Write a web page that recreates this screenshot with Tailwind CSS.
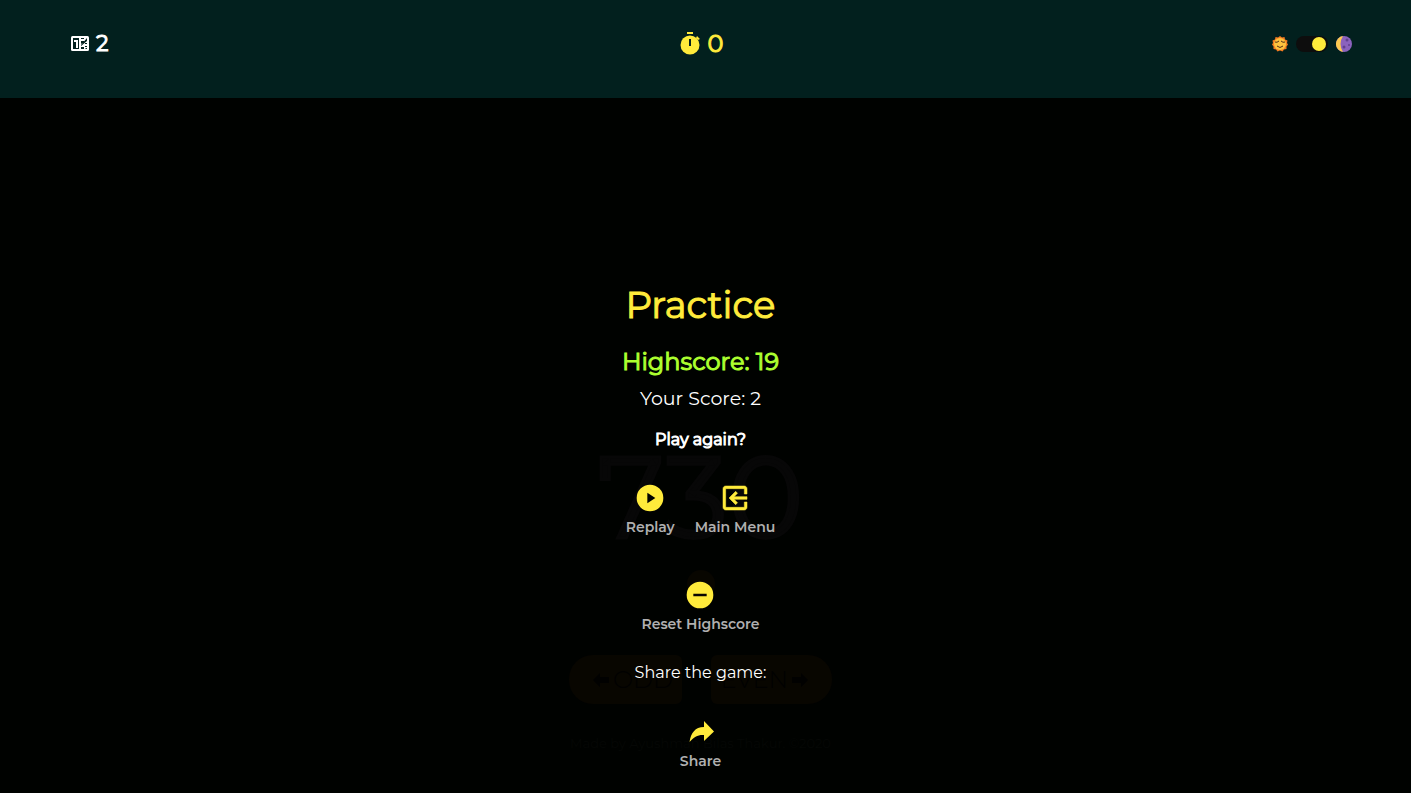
<!DOCTYPE html>
<html lang="en">
<head>
<meta charset="utf-8">
<meta name="viewport" content="width=device-width, initial-scale=1">
<title>Odd or Even</title>
<script src="https://cdn.jsdelivr.net/npm/@tailwindcss/browser@4"></script>
</head>
<body class="flex min-h-screen flex-col bg-[#000200] font-[Montserrat,Inter,sans-serif] text-white">
<header class="flex h-[98px] items-start justify-between bg-[#02201e] pt-7 pr-[59px] pl-[70px]">
  <div class="flex flex-1 items-center gap-1.5 text-[22px] leading-8 [-webkit-text-stroke:1px]">
    <svg class="size-5" viewBox="0 0 20 20"><rect x="1" y="2" width="18" height="15" rx="1.5" fill="#fff"/><path d="M3 4h6v11H3z" fill="#02201e"/><path d="M4 6h4v8H6V8H4z" fill="#fff"/><path d="M11 4h3v1h-3zM11 7h3v1l-3 2zM17 4v3l-6 5v-1zM11 13h3v2h-3zM15 9h2v1h-2zM15 12h2v1h-2zM16 14h1v1h-2z" fill="#02201e"/></svg>
    <span>2</span>
  </div>
  <div class="mr-5 flex items-center gap-[5px] text-2xl leading-8 text-[#ffeb3b] [-webkit-text-stroke:1px]">
    <svg class="size-6" viewBox="0 0 24 24"><circle cx="11" cy="13" r="9.5" fill="#ffeb3b"/><path d="M8 0h6v2H8zM18 4l3 3-2 1-2-2z" fill="#ffeb3b"/><path d="M10 7h2v7h-2z" fill="#02201e"/></svg>
    <span>0</span>
  </div>
  <div class="flex flex-1 items-center justify-end gap-2 leading-8">
    <svg class="h-8 w-4" viewBox="0 0 16 32"><path d="M8 8l2 1.500 2.500-.5.5 2.500 2.500 1-.5 2.500 1 1.500-1.500 2 0 2.500-2.500.5-1.500 2-2.500-1-2.500 1-1.500-2-2.500-.5 0-2.500-1.500-2 1-1.500-.5-2.500 2.500-1 .5-2.500 2.500.5z" fill="#f47b20"/><circle cx="8" cy="16" r="6" fill="#fdc23e"/><path d="M3 14q2 1 4-1M9 13q2 2 4 1M5 18q3 3 6 0" fill="none" stroke="#543019"/></svg>
    <label class="relative h-4 w-8"><input type="checkbox" checked aria-label="Dark mode" class="peer absolute inset-0 size-full cursor-pointer appearance-none rounded-full bg-[#0d0d0d]"><span class="pointer-events-none absolute top-px left-px size-3.5 rounded-full bg-[#ffeb3b] peer-checked:left-4"></span></label>
    <svg class="h-8 w-4" viewBox="0 0 16 32"><circle cx="8" cy="16" r="8" fill="#8b62bd"/><path d="M7 8.060a8 8 0 0 0 0 15.880q-5-8 0-15.880" fill="#fdc94f"/><circle cx="8" cy="19" r="1.5" fill="#61408f"/><circle cx="11" cy="12" r="1.5" fill="#61408f"/><circle cx="13" cy="17" r="1" fill="#61408f"/></svg>
  </div>
</header>
<main class="relative flex-1 pr-[10px]">
  <section aria-hidden="true" class="flex flex-col items-center pt-[340px]">
    <div class="text-[114px] leading-[120px] text-[#070707] [-webkit-text-stroke:3px]">730</div>
    <div class="mt-3 size-7 rounded-full bg-[#080600]"></div>
    <div class="mt-[57px] flex gap-[29px] text-2xl leading-[49px] font-light text-[#010100]">
      <button tabindex="-1" class="flex h-[49px] w-[113px] items-center gap-1 rounded-l-3xl rounded-r-md bg-[#080600] pl-6"><svg class="size-4 shrink-0" viewBox="0 0 16 16" fill="#010100"><path d="M0 8l7-7v4h9v6H7v4z"/></svg>ODD</button>
      <button tabindex="-1" class="flex h-[49px] w-[121px] items-center justify-end gap-1 rounded-l-md rounded-r-3xl bg-[#080600] pr-6">EVEN<svg class="size-4 shrink-0" viewBox="0 0 16 16" fill="#010100"><path d="M16 8l-7-7v4H0v6h9v4z"/></svg></button>
    </div>
    <p class="mt-[27px] text-[13px] leading-6 text-[#050705]">Made by Ayushman Bilas Thakur. ©2020</p>
  </section>
  <section class="absolute inset-0 flex flex-col items-center pt-[183px] pr-[10px]">
    <h1 class="text-[37px] leading-[48px] text-[#ffeb3b] [-webkit-text-stroke:1px]">Practice</h1>
    <h2 class="mt-[17px] text-2xl leading-8 text-[#adff2f] [-webkit-text-stroke:1px]">Highscore: 19</h2>
    <p class="mt-[7px] text-[19px] leading-7">Your Score: 2</p>
    <p class="mt-[15px] text-base leading-6 [-webkit-text-stroke:1px]">Play again?</p>
    <div class="mt-[30px] flex gap-5 text-sm leading-5 font-semibold text-[#b0b0b0]">
      <button class="flex flex-col items-center gap-[3px]"><svg class="size-8" viewBox="0 0 24 24" fill="#ffeb3b"><path d="M12 2a10 10 0 1 0 0 20 10 10 0 0 0 0-20zm-2 14V8l6 4z"/></svg>Replay</button>
      <button class="flex flex-col items-center gap-[3px]"><svg class="size-8" viewBox="0 0 24 24" fill="#ffeb3b"><path stroke="#ffeb3b" stroke-width=".4" d="M13.910 15.590L12.500 17l-5-5 5-5 1.410 1.410L11.330 11H21v2h-9.670zM5 3h14c1.100 0 2 .9 2 2v4h-2V5H5v14h14v-4h2v4c0 1.100-.9 2-2 2H5c-1.100 0-2-.9-2-2V5c0-1.100.9-2 2-2z"/></svg>Main Menu</button>
    </div>
    <button class="mt-[42px] flex flex-col items-center gap-[3px] text-sm leading-5 font-semibold text-[#b0b0b0]"><svg class="size-8" viewBox="0 0 24 24" fill="#ffeb3b"><path d="M12 2a10 10 0 1 0 0 20 10 10 0 0 0 0-20zm5 11H7v-2h10z"/></svg>Reset Highscore</button>
    <p class="mt-[27px] text-base leading-6">Share the game:</p>
    <button class="mt-[31px] flex flex-col items-center gap-[3px] text-sm leading-5 font-semibold text-[#b0b0b0]"><svg class="size-8" viewBox="0 0 32 32" fill="#ffeb3b"><path d="M19 5l10 10.500-10 9.500v-6c-6-.5-10 2-14.500 7C6 17 10 11 19 11z"/></svg>Share</button>
  </section>
</main>
</body>
</html>
